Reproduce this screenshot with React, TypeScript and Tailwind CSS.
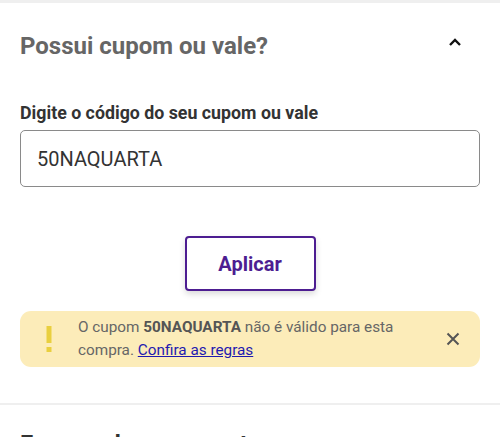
import React from "react";

export default function App() {
  return (
    <div className="w-[500px] h-[437px] overflow-hidden bg-white font-['Roboto',sans-serif]">
      <div className="h-[3px] bg-[#efefef]" />
      <div className="px-[20px]">
        <div className="flex items-center justify-between pt-[21px] h-[64px]">
          <h2 className="text-[24px] font-bold text-[#666666] leading-[28px]">Possui cupom ou vale?</h2>
          <svg width="14" height="10" viewBox="0 0 14 10" className="mr-[18px] -mt-[8px]">
            <path d="M2 8 L7 3 L12 8" fill="none" stroke="#111" strokeWidth="2.4" />
          </svg>
        </div>
        <div className="mt-[36px] text-[17.8px] font-bold text-[#333333] leading-[20px]">
          Digite o código do seu cupom ou vale
        </div>
        <div className="mt-[7px] h-[57px] rounded-[5px] border border-[#8a8a8a] flex items-center px-[16px]">
          <span className="text-[20px] text-[#333333]">50NAQUARTA</span>
        </div>
        <div className="flex justify-center mt-[49px]">
          <button className="w-[131px] h-[55px] rounded-[4px] border-2 border-[#4d1d91] bg-white shadow-[0_3px_6px_rgba(0,0,0,0.15)] text-[20px] font-bold text-[#4d1d91]">
            Aplicar
          </button>
        </div>
        <div className="mt-[20px] h-[56px] rounded-[11px] bg-[#fcecb9] flex items-center">
          <div className="w-[58px] flex justify-center">
            <svg width="6" height="26" viewBox="0 0 6 26">
              <rect x="0.5" y="0" width="5" height="17" fill="#e9cf3f" />
              <rect x="0.5" y="21" width="5" height="5" fill="#e9cf3f" />
            </svg>
          </div>
          <div className="flex-1 text-[15.3px] leading-[23px] text-[#666666]">
            O cupom <b className="text-[#555555]">50NAQUARTA</b> não é válido para esta
            <br />
            compra. <a className="text-[#1f1ab0] underline">Confira as regras</a>
          </div>
          <svg width="14" height="14" viewBox="0 0 14 14" className="mr-[20px]">
            <path d="M1.5 1.5 L12.5 12.5 M12.5 1.5 L1.5 12.5" stroke="#555" strokeWidth="2" />
          </svg>
        </div>
      </div>
      <div className="mt-[36px] h-[2px] bg-[#efefef]" />
      <div className="px-[20px] pt-[25px] text-[24px] font-bold text-[#333333] leading-[28px]">
        Formas de pagamento
      </div>
    </div>
  );
}
